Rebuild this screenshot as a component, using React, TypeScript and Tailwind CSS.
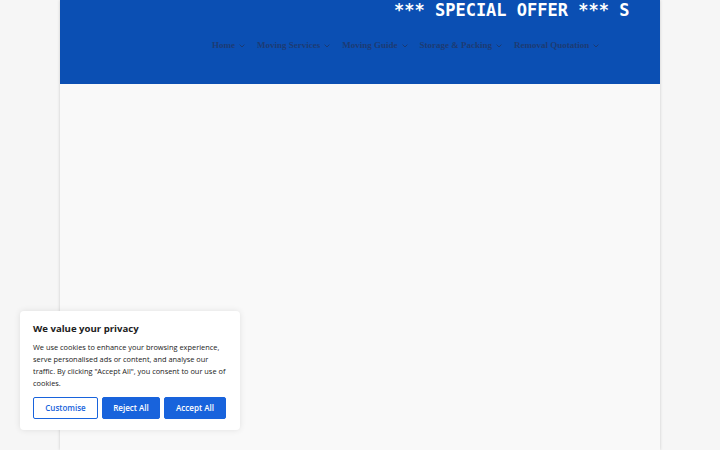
import React from "react";

const navItems = ["Home", "Moving Services", "Moving Guide", "Storage & Packing", "Removal Quotation"];

function Chevron() {
  return (
    <svg width="6" height="4" viewBox="0 0 6 4" className="ml-[4px] mt-[1px] shrink-0">
      <path d="M0.6 0.6 L3 3 L5.4 0.6" fill="none" stroke="#1b3a72" strokeWidth="1" />
    </svg>
  );
}

export default function App() {
  return (
    <div className="relative min-h-[450px] w-[720px] overflow-hidden bg-[#f6f6f6]">
      <div className="mx-auto flex h-[450px] w-[600px] flex-col bg-[#f8f8f8] shadow-[0_0_3px_rgba(0,0,0,0.18)]">
        <header className="flex h-[84px] flex-col bg-[#0b4fb3] pr-[30px]">
          <div className="flex justify-end">
            <div
              className="w-[236px] overflow-hidden whitespace-nowrap pt-[1px] text-[17px] font-bold leading-[19px] text-white"
              style={{ fontFamily: '"DejaVu Sans Mono", monospace' }}
            >
              *** SPECIAL OFFER *** ST
            </div>
          </div>
          <nav
            className="ml-[152px] mt-[21px] flex items-center gap-[12px] whitespace-nowrap text-[9px] font-bold leading-none text-[#1d3b74]"
            style={{ fontFamily: '"Liberation Serif", serif' }}
          >
            {navItems.map((n) => (
              <div key={n} className="flex shrink-0 items-center">
                <span>{n}</span>
                <Chevron />
              </div>
            ))}
          </nav>
        </header>
        <div className="flex-1 bg-[#f9f9f9]" />
      </div>

      <div
        className="absolute bottom-[20px] left-[20px] w-[220px] rounded-[4px] bg-white px-[13px] pb-[11px] pt-[11px] shadow-[0_0_6px_rgba(0,0,0,0.1)]"
        style={{ fontFamily: '"Open Sans", sans-serif' }}
      >
        <div className="text-[9.6px] font-bold leading-[14px] text-[#212121]">We value your privacy</div>
        <p className="mt-[5px] text-[7.4px] leading-[12px] text-[#212121]">
          We use cookies to enhance your browsing experience, serve personalised ads or content, and analyse our traffic. By clicking "Accept All", you consent to our use of cookies.
        </p>
        <div className="mt-[8px] flex gap-[4px]">
          <button className="h-[22px] w-[65px] rounded-[2px] border-[1.5px] border-[#1863dc] bg-white text-[8px] font-semibold text-[#1863dc]">
            Customise
          </button>
          <button className="h-[22px] w-[58px] rounded-[2px] border-[1.5px] border-[#1863dc] bg-[#1863dc] text-[8px] font-semibold text-white">
            Reject All
          </button>
          <button className="h-[22px] w-[62px] rounded-[2px] border-[1.5px] border-[#1863dc] bg-[#1863dc] text-[8px] font-semibold text-white">
            Accept All
          </button>
        </div>
      </div>
    </div>
  );
}
